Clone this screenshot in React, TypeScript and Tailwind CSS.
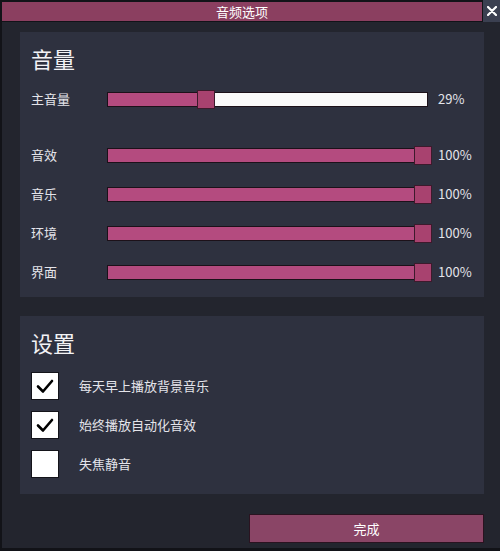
import React from 'react';

const FONT = '"Noto Sans CJK SC", "Noto Sans", sans-serif';

const TRACK_W = 321;
const THUMB_W = 18;

function Slider({ label, value }: { label: string; value: number }) {
  const left = Math.round((value / 100) * (TRACK_W - THUMB_W + 3));
  return (
    <div className="flex h-[20px] items-center">
      <div className="w-[76px] text-[13px] text-[#e4e4ea]">{label}</div>
      <div className="relative h-[15px] w-[321px] border border-[#1c1119] bg-[#fafafa]">
        <div className="h-full bg-[#b44b7f]" style={{ width: left + 2 }} />
        <div
          className="absolute top-[-3px] h-[19px] w-[18px] border border-[#3d1a2c] bg-[#a8426f]"
          style={{ left }}
        />
      </div>
      <div className="ml-[10px] text-[13px] text-[#e4e4ea]">{value}%</div>
    </div>
  );
}

function Check({ label, checked }: { label: string; checked: boolean }) {
  return (
    <div className="flex h-[28px] items-center">
      <div className="flex h-[28px] w-[28px] items-center justify-center border border-[#14141a] bg-white">
        {checked && (
          <svg width="20" height="20" viewBox="0 0 20 20">
            <path d="M3 10.5 L8 15.5 L17 5" fill="none" stroke="#000" strokeWidth="2.6" strokeLinecap="round" strokeLinejoin="round" />
          </svg>
        )}
      </div>
      <div className="ml-[20px] text-[13px] text-[#e4e4ea]">{label}</div>
    </div>
  );
}

export default function App() {
  return (
    <div
      className="flex h-[551px] w-[500px] flex-col border-b-[3px] border-l-2 border-[#121318] bg-[#23252e]"
      style={{ fontFamily: FONT }}
    >
      <div className="flex h-[22px] bg-[#121318]">
        <div className="mt-[2px] flex h-[19px] flex-1 items-center justify-center bg-[#8b3f60] text-[13px] text-white">
          音频选项
        </div>
        <div className="ml-[1px] flex h-[22px] w-[17px] items-center justify-center bg-[#3b4051]">
          <svg width="10" height="10" viewBox="0 0 10 10">
            <path d="M1 1 L9 9 M9 1 L1 9" stroke="#fff" strokeWidth="2.2" strokeLinecap="round" />
          </svg>
        </div>
      </div>

      <div className="flex flex-col pl-[18px] pr-[16px] pt-[10px]">
        <div className="flex flex-col bg-[#2e313f] pb-[15px] pl-[11px] pt-[12px]">
          <div className="text-[22px] leading-[28px] text-[#f2f2f5]">音量</div>
          <div className="mt-[17px]">
            <Slider label="主音量" value={29} />
          </div>
          <div className="mt-[36px] flex flex-col gap-[19px]">
            <Slider label="音效" value={100} />
            <Slider label="音乐" value={100} />
            <Slider label="环境" value={100} />
            <Slider label="界面" value={100} />
          </div>
        </div>

        <div className="mt-[19px] flex flex-col bg-[#2e313f] pb-[16px] pl-[11px] pt-[12px]">
          <div className="text-[22px] leading-[28px] text-[#f2f2f5]">设置</div>
          <div className="mt-[16px] flex flex-col gap-[11px]">
            <Check label="每天早上播放背景音乐" checked />
            <Check label="始终播放自动化音效" checked />
            <Check label="失焦静音" checked={false} />
          </div>
        </div>

        <div className="mt-[20px] flex justify-end">
          <button className="h-[29px] w-[235px] border border-[#2a1320] bg-[#8a4566] text-[13px] text-white">
            完成
          </button>
        </div>
      </div>
    </div>
  );
}
